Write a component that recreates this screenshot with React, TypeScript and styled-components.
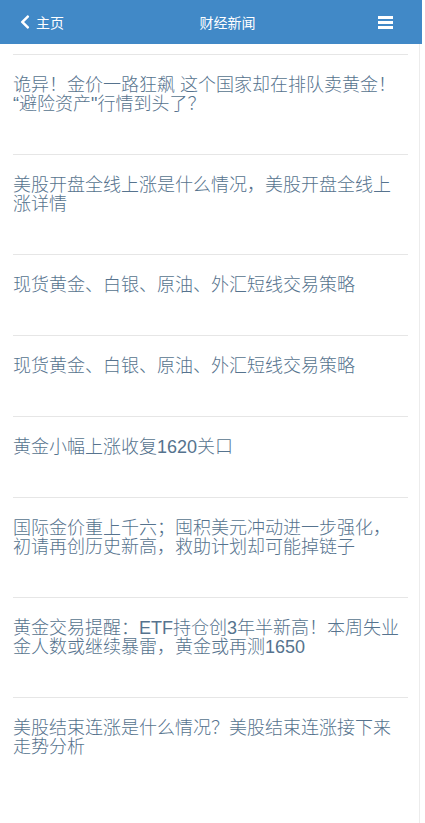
import React from "react";
import styled, { createGlobalStyle } from "styled-components";
import { FaChevronLeft } from "react-icons/fa";

const news = [
  "诡异！金价一路狂飙 这个国家却在排队卖黄金！\u200B“避险资产\"行情到头了？",
  "美股开盘全线上涨是什么情况，美股开盘全线上涨详情",
  "现货黄金、白银、原油、外汇短线交易策略",
  "现货黄金、白银、原油、外汇短线交易策略",
  "黄金小幅上涨收复1620关口",
  "国际金价重上千六；囤积美元冲动进一步强化，初请再创历史新高，救助计划却可能掉链子",
  "黄金交易提醒：ETF持仓创3年半新高！本周失业金人数或继续暴雷，黄金或再测1650",
  "美股结束连涨是什么情况？美股结束连涨接下来走势分析",
];

const App = () => {
  return (
    <>
      <GlobalStyle />
      <Page>
        <Header>
          <BackLink href="#">
            <FaChevronLeft size={16} />
            <span>主页</span>
          </BackLink>
          <Title>财经新闻</Title>
          <MenuButton>
            <svg width="15" height="13" viewBox="0 0 15 13">
              <rect x="0" y="0" width="15" height="3" fill="#fff" />
              <rect x="0" y="5" width="15" height="3" fill="#fff" />
              <rect x="0" y="10" width="15" height="3" fill="#fff" />
            </svg>
          </MenuButton>
        </Header>
        <Main>
          <NewsList>
            {news.map((title, index) => (
              <NewsItem key={title + index}>
                <NewsLink href="#">{title}</NewsLink>
              </NewsItem>
            ))}
          </NewsList>
        </Main>
      </Page>
    </>
  );
};
export default App;

const GlobalStyle = createGlobalStyle`
  html, body {
    margin: 0;
    padding: 0;
    background: #fff;
  }
  body {
    font-family: "Liberation Sans", "Noto Sans CJK SC", sans-serif;
  }
`;

const Page = styled.div`
  width: 422px;
  min-height: 100vh;
  display: flex;
  flex-direction: column;
`;

const Header = styled.header`
  height: 44px;
  background-color: #4189c7;
  display: flex;
  align-items: center;
  color: #fff;
`;

const BackLink = styled.a`
  width: 93px;
  padding-left: 17px;
  display: flex;
  align-items: center;
  gap: 3px;
  color: #fff;
  text-decoration: none;
  font-size: 14px;
`;

const Title = styled.h1`
  flex: 1;
  margin: 0;
  text-align: center;
  font-size: 14px;
  font-weight: normal;
`;

const MenuButton = styled.div`
  width: 48px;
  padding-right: 29px;
  display: flex;
  justify-content: flex-end;
  align-items: center;
  cursor: pointer;
`;

const Main = styled.main`
  flex: 1;
  width: 419px;
  border-right: 1px solid #ececec;
`;

const NewsList = styled.ul`
  list-style: none;
  margin: 0;
  padding: 10px 11px 0 13px;
`;

const NewsItem = styled.li`
  border-top: 1px solid #e6e6e6;
  padding: 21px 0 40px;
`;

const NewsLink = styled.a`
  display: block;
  font-size: 18px;
  line-height: 19px;
  font-weight: 300;
  color: #56738e;
  text-decoration: none;
`;
